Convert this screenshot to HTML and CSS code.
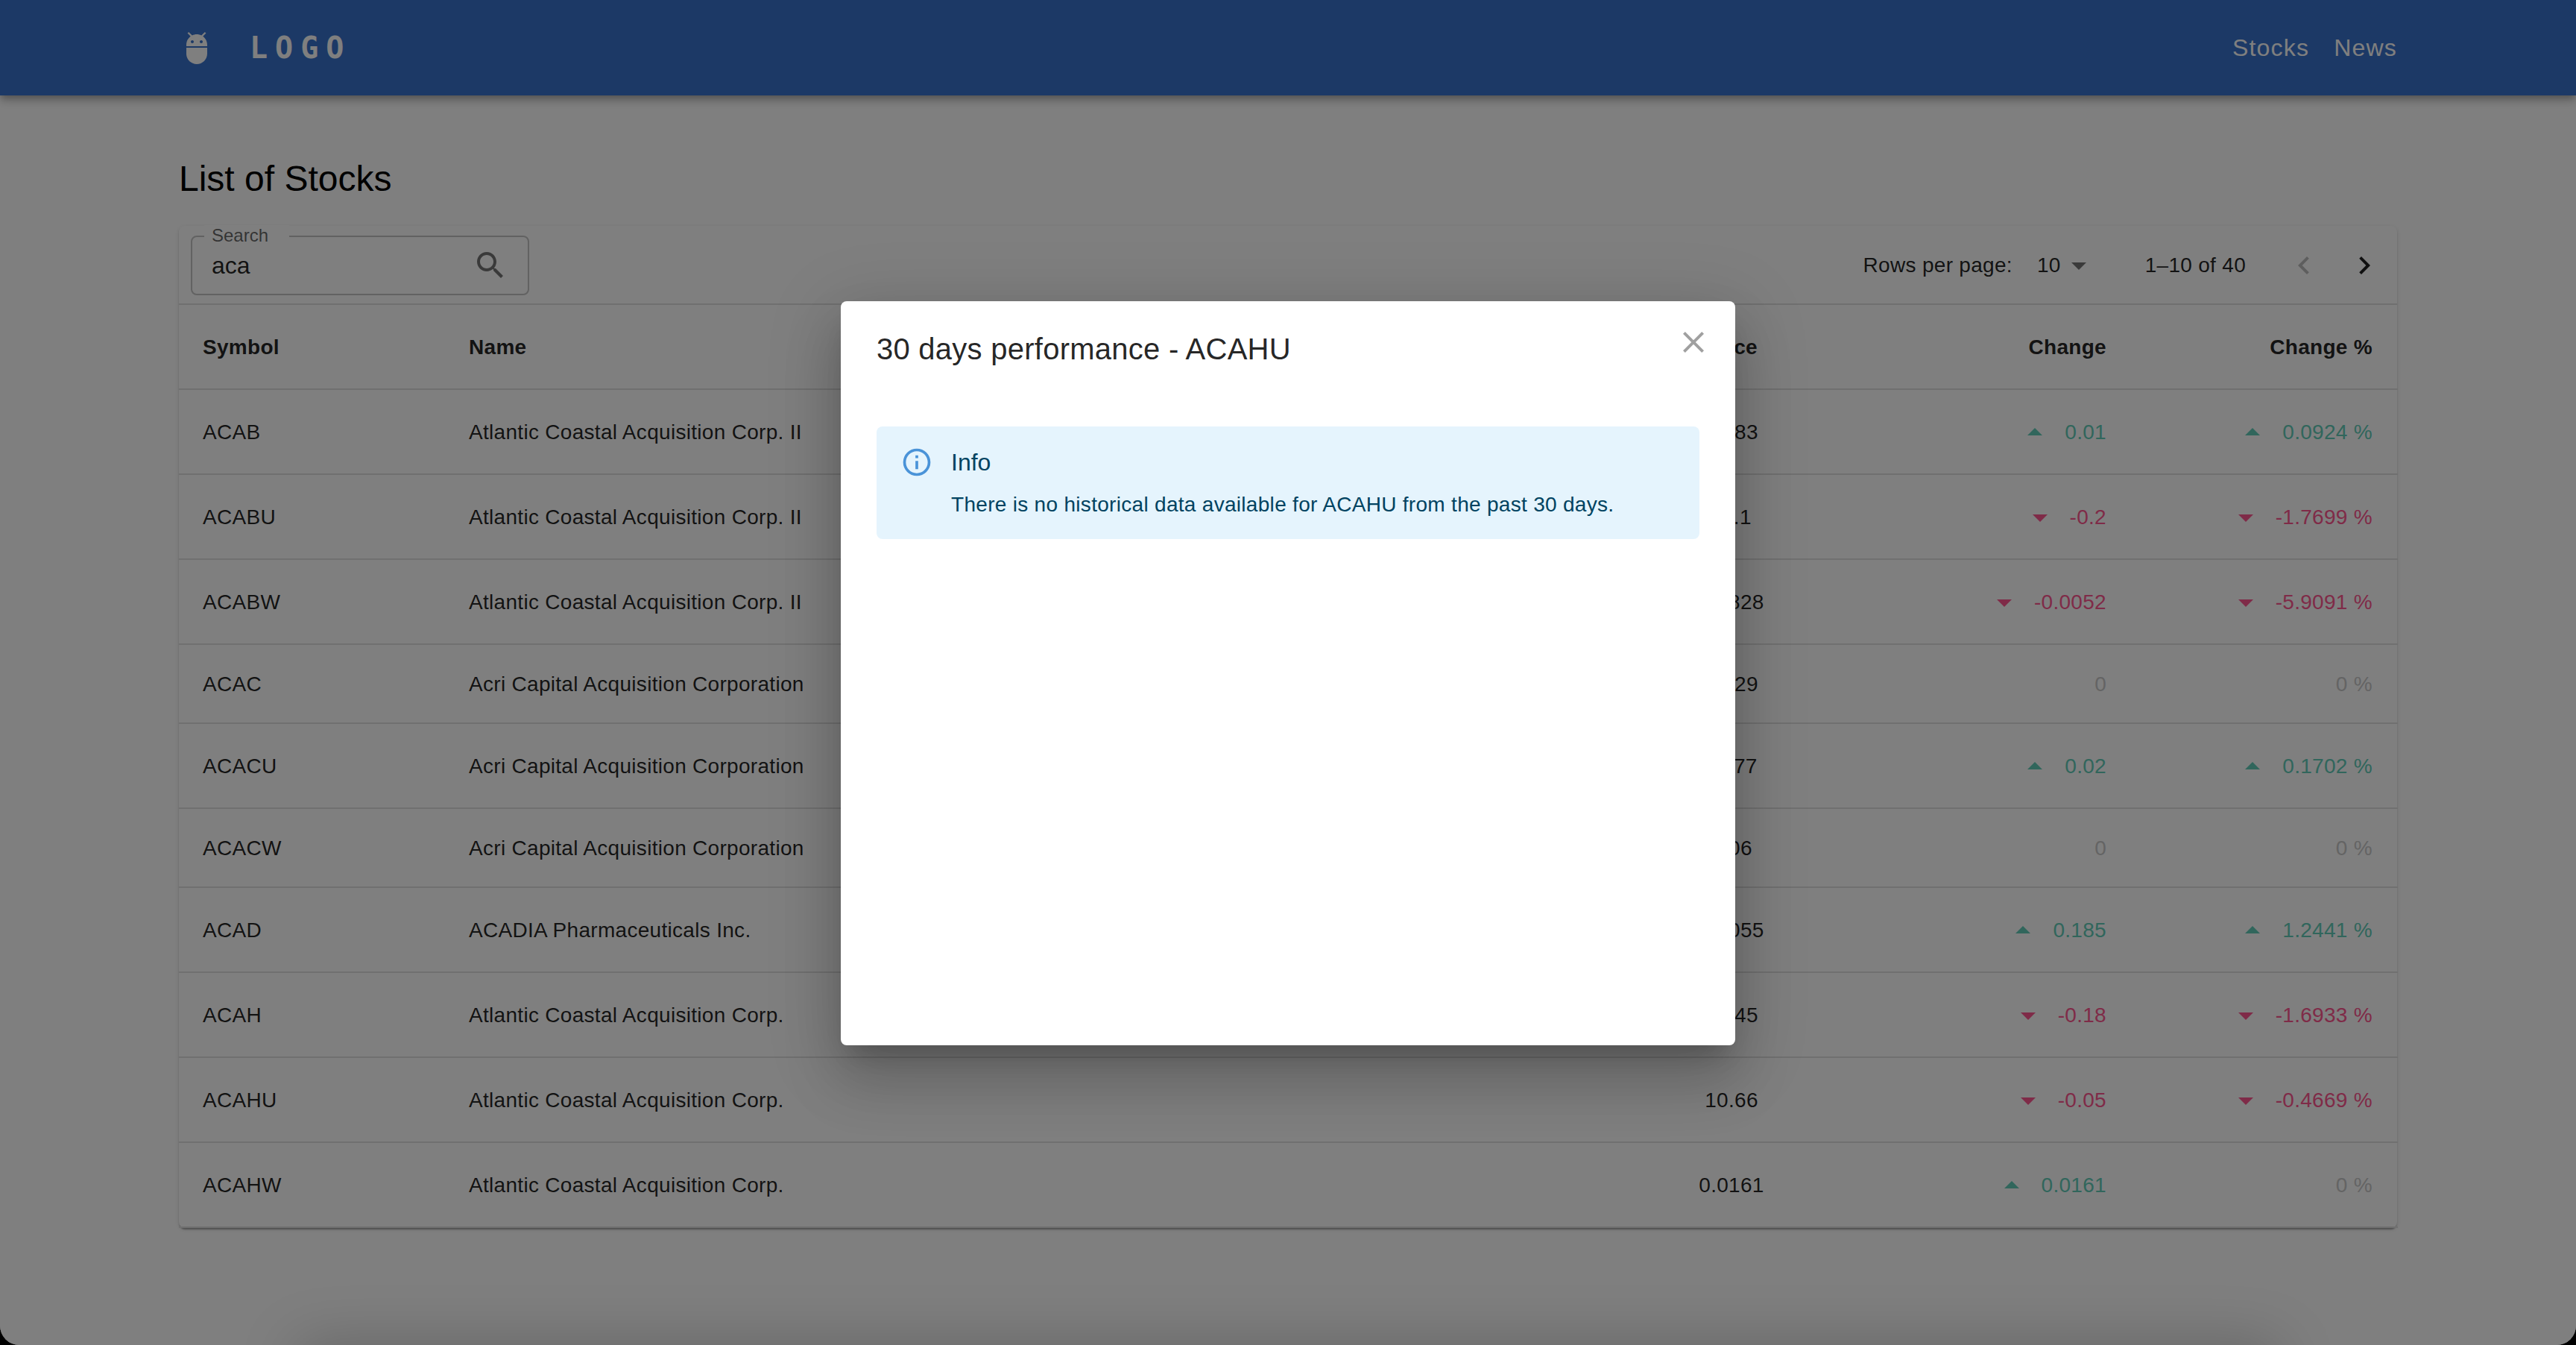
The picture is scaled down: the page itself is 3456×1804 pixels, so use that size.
FILE: index.html
```html
<!DOCTYPE html>
<html lang="en">
<head>
  <meta charset="UTF-8" />
  <title>List of Stocks</title>
  <link rel="stylesheet" href="styles.css">
</head>
<body>
  <header class="appbar">
    <a class="brand">
      <svg class="brand-icon" viewBox="0 0 24 24"><path d="M5 16c0 3.87 3.13 7 7 7s7-3.13 7-7v-4H5v4zM16.12 4.37l2.1-2.1-.82-.83-2.3 2.31C14.16 3.28 13.12 3 12 3s-2.16.28-3.09.75L6.6 1.44l-.82.83 2.1 2.1C6.14 5.64 5 7.7 5 10v1h14v-1c0-2.3-1.14-4.36-2.88-5.63zM9 9c-.55 0-1-.45-1-1s.45-1 1-1 1 .45 1 1-.45 1-1 1zm6 0c-.55 0-1-.45-1-1s.45-1 1-1 1 .45 1 1-.45 1-1 1z"/></svg>
      <span class="brand-text">LOGO</span>
    </a>
    <nav class="nav">
      <a>Stocks</a>
      <a>News</a>
    </nav>
  </header>

  <main class="content">
    <h1 class="title">List of Stocks</h1>

    <section class="paper">
      <div class="toolbar">
        <div class="search">
          <span class="search-label">Search</span>
          <span class="search-value">aca</span>
          <svg class="icon search-icon" viewBox="0 0 24 24"><path d="M15.5 14h-.79l-.28-.27C15.41 12.59 16 11.11 16 9.5 16 5.91 13.09 3 9.5 3S3 5.91 3 9.5 5.91 16 9.5 16c1.61 0 3.09-.59 4.23-1.57l.27.28v.79l5 4.99L20.49 19l-4.99-5zm-6 0C7.01 14 5 11.99 5 9.5S7.01 5 9.5 5 14 7.01 14 9.5 11.99 14 9.5 14z"/></svg>
        </div>
        <div class="pager">
          <span class="pager-label">Rows per page:</span>
          <span class="pager-select">10<svg class="icon caret" viewBox="0 0 24 24"><path d="m7 10 5 5 5-5z"/></svg></span>
          <span class="pager-range">1–10 of 40</span>
          <svg class="icon prev" viewBox="0 0 24 24"><path d="M15.41 7.41 14 6l-6 6 6 6 1.41-1.41L10.83 12z"/></svg>
          <svg class="icon next" viewBox="0 0 24 24"><path d="M10 6 8.59 7.41 13.17 12l-4.58 4.59L10 18l6-6z"/></svg>
        </div>
      </div>

      <table class="stocks">
        <colgroup>
          <col class="col-symbol"><col class="col-name"><col class="col-price"><col class="col-change"><col class="col-percent">
        </colgroup>
        <thead>
          <tr><th>Symbol</th><th>Name</th><th class="center">Price</th><th class="right">Change</th><th class="right">Change %</th></tr>
        </thead>
        <tbody>
          <tr>
            <td>ACAB</td><td>Atlantic Coastal Acquisition Corp. II</td><td class="center">10.83</td>
            <td><div class="delta up"><svg class="icon" viewBox="0 0 24 24"><path d="m7 14 5-5 5 5z"/></svg>0.01</div></td>
            <td><div class="delta up"><svg class="icon" viewBox="0 0 24 24"><path d="m7 14 5-5 5 5z"/></svg>0.0924 %</div></td>
          </tr>
          <tr>
            <td>ACABU</td><td>Atlantic Coastal Acquisition Corp. II</td><td class="center">11.1</td>
            <td><div class="delta down"><svg class="icon" viewBox="0 0 24 24"><path d="m7 10 5 5 5-5z"/></svg>-0.2</div></td>
            <td><div class="delta down"><svg class="icon" viewBox="0 0 24 24"><path d="m7 10 5 5 5-5z"/></svg>-1.7699 %</div></td>
          </tr>
          <tr>
            <td>ACABW</td><td>Atlantic Coastal Acquisition Corp. II</td><td class="center">0.0828</td>
            <td><div class="delta down"><svg class="icon" viewBox="0 0 24 24"><path d="m7 10 5 5 5-5z"/></svg>-0.0052</div></td>
            <td><div class="delta down"><svg class="icon" viewBox="0 0 24 24"><path d="m7 10 5 5 5-5z"/></svg>-5.9091 %</div></td>
          </tr>
          <tr>
            <td>ACAC</td><td>Acri Capital Acquisition Corporation</td><td class="center">10.29</td>
            <td><div class="delta flat">0</div></td>
            <td><div class="delta flat">0 %</div></td>
          </tr>
          <tr>
            <td>ACACU</td><td>Acri Capital Acquisition Corporation</td><td class="center">11.77</td>
            <td><div class="delta up"><svg class="icon" viewBox="0 0 24 24"><path d="m7 14 5-5 5 5z"/></svg>0.02</div></td>
            <td><div class="delta up"><svg class="icon" viewBox="0 0 24 24"><path d="m7 14 5-5 5 5z"/></svg>0.1702 %</div></td>
          </tr>
          <tr>
            <td>ACACW</td><td>Acri Capital Acquisition Corporation</td><td class="center">0.06</td>
            <td><div class="delta flat">0</div></td>
            <td><div class="delta flat">0 %</div></td>
          </tr>
          <tr>
            <td>ACAD</td><td>ACADIA Pharmaceuticals Inc.</td><td class="center">15.055</td>
            <td><div class="delta up"><svg class="icon" viewBox="0 0 24 24"><path d="m7 14 5-5 5 5z"/></svg>0.185</div></td>
            <td><div class="delta up"><svg class="icon" viewBox="0 0 24 24"><path d="m7 14 5-5 5 5z"/></svg>1.2441 %</div></td>
          </tr>
          <tr>
            <td>ACAH</td><td>Atlantic Coastal Acquisition Corp.</td><td class="center">10.45</td>
            <td><div class="delta down"><svg class="icon" viewBox="0 0 24 24"><path d="m7 10 5 5 5-5z"/></svg>-0.18</div></td>
            <td><div class="delta down"><svg class="icon" viewBox="0 0 24 24"><path d="m7 10 5 5 5-5z"/></svg>-1.6933 %</div></td>
          </tr>
          <tr>
            <td>ACAHU</td><td>Atlantic Coastal Acquisition Corp.</td><td class="center">10.66</td>
            <td><div class="delta down"><svg class="icon" viewBox="0 0 24 24"><path d="m7 10 5 5 5-5z"/></svg>-0.05</div></td>
            <td><div class="delta down"><svg class="icon" viewBox="0 0 24 24"><path d="m7 10 5 5 5-5z"/></svg>-0.4669 %</div></td>
          </tr>
          <tr>
            <td>ACAHW</td><td>Atlantic Coastal Acquisition Corp.</td><td class="center">0.0161</td>
            <td><div class="delta up"><svg class="icon" viewBox="0 0 24 24"><path d="m7 14 5-5 5 5z"/></svg>0.0161</div></td>
            <td><div class="delta flat">0 %</div></td>
          </tr>
        </tbody>
      </table>
    </section>
  </main>

  <div class="backdrop">
    <div class="edge-shade"></div>
    <div class="modal">
      <h2 class="modal-title">30 days performance - ACAHU</h2>
      <svg class="modal-close" viewBox="0 0 24 24"><path d="M19 6.41 17.59 5 12 10.59 6.41 5 5 6.41 10.59 12 5 17.59 6.41 19 12 13.41 17.59 19 19 17.59 13.41 12z"/></svg>
      <div class="alert">
        <svg class="alert-icon" viewBox="0 0 24 24"><path d="M11,9H13V7H11V9M12,20C7.59,20 4,16.41 4,12C4,7.59 7.59,4 12,4C16.41,4 20,7.59 20,12C20,16.41 16.41,20 12,20M12,2A10,10 0 0,0 2,12A10,10 0 0,0 12,22A10,10 0 0,0 22,12A10,10 0 0,0 12,2M11,17H13V11H11V17Z"/></svg>
        <div>
          <div class="alert-title">Info</div>
          <div class="alert-text">There is no historical data available for ACAHU from the past 30 days.</div>
        </div>
      </div>
    </div>
  </div>
</body>
</html>
```

FILE: styles.css
```css
html{background:#000;}
body{
  margin:0;height:1804px;position:relative;overflow:hidden;
  background:#fff;border-radius:0 0 26px 26px;
  font-family:"Liberation Sans",Arial,sans-serif;font-size:28px;letter-spacing:.3px;
  color:rgba(0,0,0,.87);
}
.icon{width:48px;height:48px;fill:currentColor;flex:none;display:block;}

/* ---------------- App bar ---------------- */
.appbar{
  height:128px;box-sizing:border-box;padding:0 240px;
  display:flex;align-items:center;justify-content:space-between;
  background:#3872cc;color:#fff;
  box-shadow:0 4px 8px -2px rgba(0,0,0,.2),0 8px 10px rgba(0,0,0,.14),0 2px 20px rgba(0,0,0,.12);
}
.brand{display:flex;align-items:center;gap:47px;}
.brand-icon{width:48px;height:48px;fill:#fff;}
.brand-text{
  font-family:"DejaVu Sans Mono","Liberation Mono",monospace;font-weight:700;
  font-size:40px;letter-spacing:10px;
}
.nav{display:flex;gap:33px;font-size:32px;letter-spacing:1.2px;}

/* ---------------- Content ---------------- */
.content{padding:80px 240px 0 240px;}
.title{margin:0 0 31px;font-size:48px;font-weight:400;line-height:64px;letter-spacing:0;color:#000;}
.paper{
  background:#fff;border-radius:8px;
  box-shadow:0 4px 2px -2px rgba(0,0,0,.2),0 2px 2px rgba(0,0,0,.14),0 2px 6px rgba(0,0,0,.12);
}
.toolbar{
  height:106px;box-sizing:border-box;padding:2px 20px 0 16px;
  display:flex;align-items:center;justify-content:space-between;
  border-bottom:2px solid #e0e0e0;
}

/* search field */
.search{
  position:relative;width:454px;height:80px;box-sizing:border-box;
  display:flex;align-items:center;justify-content:space-between;
  padding:0 26px 0 26px;
  border:2px solid #c4c4c4;border-radius:8px;
}
.search-label{
  position:absolute;left:16px;top:-16px;padding:0 28px 0 10px;
  background:#fff;color:rgba(0,0,0,.6);font-size:24px;line-height:28px;letter-spacing:0;
}
.search-value{font-size:32px;line-height:46px;letter-spacing:0;}
.search-icon{color:rgba(0,0,0,.54);}

/* pagination */
.pager{display:flex;align-items:center;color:rgba(0,0,0,.87);}
.pager-select{display:flex;align-items:center;margin-left:33px;}
.caret{color:rgba(0,0,0,.54);}
.pager-range{margin-left:65px;}
.pager .prev{margin-left:54px;color:rgba(0,0,0,.26);}
.pager .next{margin-left:33px;}

/* ---------------- Table ---------------- */
.stocks{width:100%;border-collapse:separate;border-spacing:0;table-layout:fixed;}
.col-symbol{width:357px;}
.col-name{width:1549px;}
.col-price{width:354px;}
.col-change{width:358px;}
.col-percent{width:359px;}
th,td{
  padding:33px 32px 31px;text-align:left;line-height:40px;
  border-bottom:2px solid #e0e0e0;white-space:nowrap;
}
th{font-weight:700;line-height:48px;}
th:last-child,td:last-child{padding-right:34px;}
.center{text-align:center;}
.right{text-align:right;}
.delta{display:flex;align-items:center;justify-content:flex-end;gap:16px;}
.up{color:#62cdb9;}
.down{color:#ff5790;}
.flat{color:#c9c9c9;}

/* ---------------- Modal ---------------- */
.backdrop{
  position:absolute;inset:0;padding-top:2px;box-sizing:border-box;
  display:flex;align-items:center;justify-content:center;
  background:rgba(0,0,0,.5);
}
.edge-shade{
  position:absolute;left:400px;right:400px;bottom:-70px;height:70px;
  box-shadow:0 0 80px rgba(0,0,0,.22);
}
.modal{
  position:relative;width:1200px;height:998px;box-sizing:border-box;
  padding:32px 48px;background:#fff;border-radius:8px;
  box-shadow:0 22px 30px -14px rgba(0,0,0,.2),0 48px 76px 6px rgba(0,0,0,.14),0 18px 92px 16px rgba(0,0,0,.12);
}
.modal-title{margin:0 0 72px;font-size:40px;font-weight:400;line-height:64px;letter-spacing:.25px;}
.modal-close{position:absolute;top:31px;right:32px;width:48px;height:48px;fill:#a0a0a0;}
.alert{
  display:flex;gap:24px;height:151px;box-sizing:border-box;
  padding:24px 32px 0;background:#e5f4fd;border-radius:8px;color:#014361;
}
.alert-icon{width:44px;height:44px;flex:none;margin-top:2px;fill:#4a93d8;}
.alert-title{font-size:32px;line-height:48px;margin-bottom:13px;letter-spacing:0;}
.alert-text{line-height:40px;}
```
